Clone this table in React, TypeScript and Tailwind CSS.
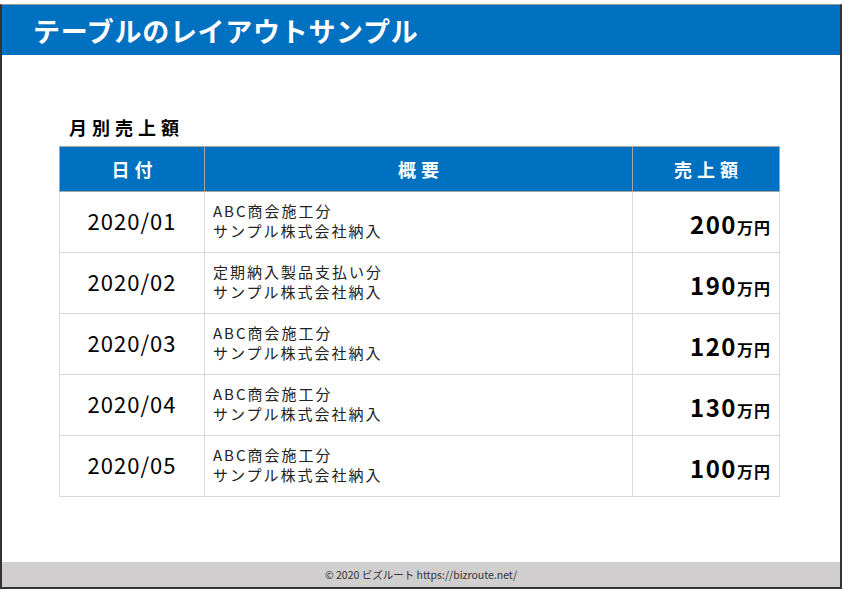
import React from "react";

const rows = [
  { d: "2020/01", l1: "ABC商会施工分", l2: "サンプル株式会社納入", v: "200" },
  { d: "2020/02", l1: "定期納入製品支払い分", l2: "サンプル株式会社納入", v: "190" },
  { d: "2020/03", l1: "ABC商会施工分", l2: "サンプル株式会社納入", v: "120" },
  { d: "2020/04", l1: "ABC商会施工分", l2: "サンプル株式会社納入", v: "130" },
  { d: "2020/05", l1: "ABC商会施工分", l2: "サンプル株式会社納入", v: "100" },
];

export default function App() {
  return (
    <div
      className="w-[842px] h-[595px] bg-white pt-[4px]"
      style={{ fontFamily: '"Noto Sans CJK JP", "Noto Sans", sans-serif' }}
    >
      <div className="w-[842px] h-[585px] border-t border-t-[#9a9a9a] border-x-2 border-b-2 border-[#333333] flex flex-col">
        <div className="h-[50px] bg-[#0070c0] flex items-center pl-[31px]">
          <h1 className="text-white font-bold text-[27px] leading-none tracking-[0.7px]">
            テーブルのレイアウトサンプル
          </h1>
        </div>
        <div className="flex-1 pl-[57px] pt-[59px]">
          <h2 className="text-[18px] font-bold tracking-[5px] leading-none pl-[10px] text-black h-[32px] pt-[4px]">
            月別売上額
          </h2>
          <table className="border-collapse w-[721px] text-black">
            <thead>
              <tr className="h-[45px] bg-[#0070c0] text-white">
                <th className="w-[145px] border border-[#a6a6a6] text-[18px] font-bold tracking-[5px] pl-[5px]">日付</th>
                <th className="w-[428px] border border-[#a6a6a6] text-[18px] font-bold tracking-[5px] pl-[5px]">概要</th>
                <th className="border border-[#a6a6a6] text-[18px] font-bold tracking-[5px] pl-[5px]">売上額</th>
              </tr>
            </thead>
            <tbody>
              {rows.map((r) => (
                <tr key={r.d} className="h-[61px]">
                  <td className="border border-[#d9d9d9] text-center text-[22px] tracking-[1px] pb-[4px]">{r.d}</td>
                  <td className="border border-[#d9d9d9] pl-[8px] pb-[3px] text-[15px] leading-[20px] tracking-[2px] text-[#222]">
                    <div>{r.l1}</div>
                    <div>{r.l2}</div>
                  </td>
                  <td className="border border-[#d9d9d9] text-right pr-[8px] pt-[3px]">
                    <span className="text-[24px] font-bold tracking-[1.5px]">{r.v}</span>
                    <span className="text-[16px] font-bold tracking-[1px]">万円</span>
                  </td>
                </tr>
              ))}
            </tbody>
          </table>
        </div>
        <div className="h-[25px] bg-[#d0cece] flex items-center justify-center text-[10.5px] text-[#333]">
          © 2020 ビズルート https://bizroute.net/
        </div>
      </div>
    </div>
  );
}
